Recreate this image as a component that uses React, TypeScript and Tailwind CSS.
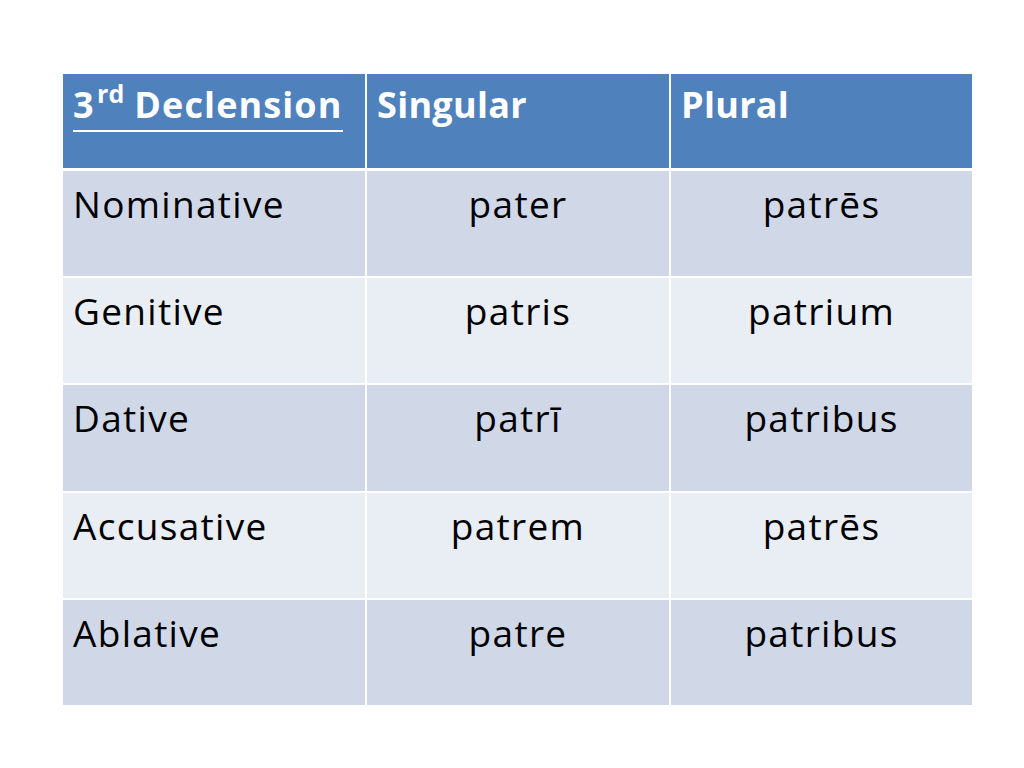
import React from "react";

const rows = [
  ["Nominative", "pater", "patrēs", "bg-[#d0d8e8]"],
  ["Genitive", "patris", "patrium", "bg-[#e9edf4]"],
  ["Dative", "patrī", "patribus", "bg-[#d0d8e8]"],
  ["Accusative", "patrem", "patrēs", "bg-[#e9edf4]"],
  ["Ablative", "patre", "patribus", "bg-[#d0d8e8]"],
];

export default function App() {
  return (
    <div
      className="w-[1024px] h-[768px] bg-white pt-[74px] pl-[63px] [font-variant-ligatures:none]"
      style={{ fontFamily: "'Open Sans', 'Noto Sans', sans-serif" }}
    >
      <div className="w-[909px] grid grid-cols-[302px_302px_301px] gap-x-[2px] bg-white">
        <div className="h-[94px] bg-[#4f81bd] pl-[10px] pt-[6px] text-white font-bold text-[36px] leading-[50px] tracking-[0.3px]">
          <span className="inline-block leading-[43px] border-b-[2.5px] border-white">
            3<span className="relative top-[-15px] text-[25px] ml-[3px]">rd</span>{" "}
            <span className="tracking-[1.1px]">Declension</span>
          </span>
        </div>
        <div className="h-[94px] bg-[#4f81bd] pl-[10px] pt-[6px] text-white font-bold text-[36px] leading-[50px] tracking-[0.3px]">
          Singular
        </div>
        <div className="h-[94px] bg-[#4f81bd] pl-[10px] pt-[6px] text-white font-bold text-[36px] leading-[50px] tracking-[0.3px]">
          Plural
        </div>
      </div>
      <div className="w-[909px] grid grid-cols-[302px_302px_301px] gap-x-[2px] gap-y-[2px] mt-[3px] bg-white">
        {rows.map(([a, b, c, bg]) => (
          <React.Fragment key={a}>
            <div className={`h-[105.2px] ${bg} pl-[10px] pt-[7px] text-black text-[37px] leading-[52px] tracking-[1.3px]`}>{a}</div>
            <div className={`h-[105.2px] ${bg} pt-[7px] text-center text-black text-[37px] leading-[52px] tracking-[1.3px]`}>{b}</div>
            <div className={`h-[105.2px] ${bg} pt-[7px] text-center text-black text-[37px] leading-[52px] tracking-[1.3px]`}>{c}</div>
          </React.Fragment>
        ))}
      </div>
    </div>
  );
}
